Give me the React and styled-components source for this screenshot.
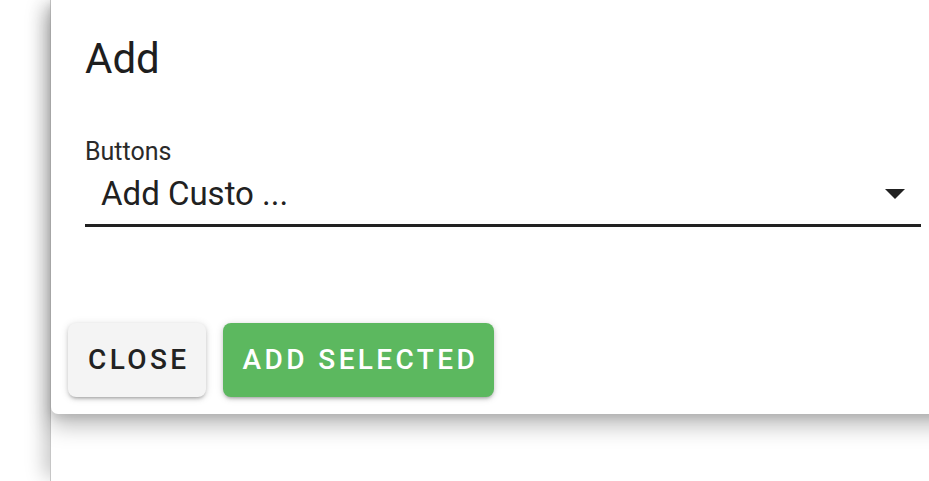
import styled, { createGlobalStyle } from "styled-components";

const GlobalStyle = createGlobalStyle`
  html, body {
    margin: 0;
    padding: 0;
    background: #ffffff;
    overflow: hidden;
    font-family: Roboto, "Liberation Sans", Arial, sans-serif;
  }
`;

const Page = styled.div`
  display: flex;
  height: 100vh;
  padding-left: 50px;
  box-sizing: border-box;
`;

const Sheet = styled.div`
  flex: 1;
  display: flex;
  flex-direction: column;
  background: #ffffff;
  border-left: 1px solid #c6c6c6;
  box-shadow: -10px 0 18px -4px rgba(0, 0, 0, 0.22);
`;

const Dialog = styled.div`
  width: 904px;
  flex-shrink: 0;
  display: flex;
  flex-direction: column;
  background: #ffffff;
  border-radius: 0 0 0 7px;
  box-shadow: 0 12px 22px rgba(0, 0, 0, 0.26), 0 4px 8px rgba(0, 0, 0, 0.1);
`;

const Title = styled.h2`
  margin: 0;
  padding: 35px 34px 0;
  font-size: 42px;
  line-height: 48px;
  font-weight: 400;
  color: #1e1e1e;
`;

const Content = styled.div`
  padding: 55px 34px 0;
`;

const Label = styled.div`
  font-size: 25px;
  line-height: 28px;
  color: #2a2a2a;
`;

const SelectRow = styled.div`
  display: flex;
  align-items: center;
  justify-content: space-between;
  margin-top: 9px;
  padding: 0 16px 11px 16px;
  border-bottom: 3px solid #212121;
`;

const SelectValue = styled.span`
  font-size: 33px;
  line-height: 38px;
  color: #212121;
`;

const Arrow = styled.span`
  width: 0;
  height: 0;
  border-left: 10px solid transparent;
  border-right: 10px solid transparent;
  border-top: 10px solid #212121;
`;

const Actions = styled.div`
  display: flex;
  gap: 17px;
  padding: 96px 17px 17px;
`;

const Button = styled.button`
  font-family: Roboto, "Liberation Sans", Arial, sans-serif;
  font-size: 28px;
  line-height: 34px;
  font-weight: 500;
  letter-spacing: 3.4px;
  text-transform: uppercase;
  padding: 20px 16px 20px 20px;
  border: none;
  border-radius: 8px;
  cursor: pointer;
  color: ${(p) => (p.$primary ? "#ffffff" : "#222222")};
  background: ${(p) => (p.$primary ? "#5cb85f" : "#f4f4f4")};
  box-shadow: 0 3px 3px -2px rgba(0, 0, 0, 0.2), 0 2px 4px 0 rgba(0, 0, 0, 0.14),
    0 1px 8px 0 rgba(0, 0, 0, 0.12);
`;

export default function App() {
  return (
    <>
      <GlobalStyle />
      <Page>
        <Sheet>
          <Dialog>
            <Title>Add</Title>
            <Content>
              <Label>Buttons</Label>
              <SelectRow>
                <SelectValue>Add Custo ...</SelectValue>
                <Arrow />
              </SelectRow>
            </Content>
            <Actions>
              <Button>Close</Button>
              <Button $primary>Add Selected</Button>
            </Actions>
          </Dialog>
        </Sheet>
      </Page>
    </>
  );
}
